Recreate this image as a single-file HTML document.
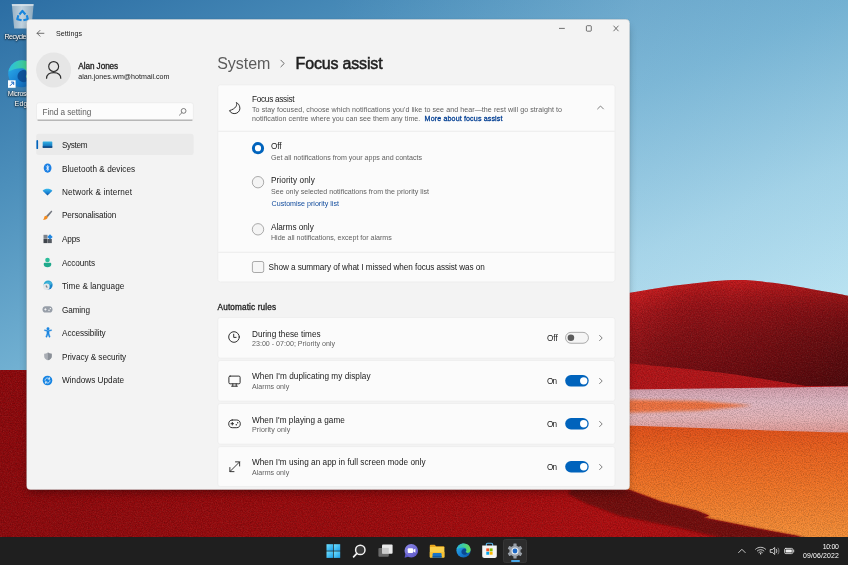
<!DOCTYPE html>
<html lang="en"><head><meta charset="utf-8"><title>Settings - Focus assist</title>
<style>
*{box-sizing:border-box;margin:0;padding:0}
html,body{width:848px;height:565px;overflow:hidden;background:#8e0c10}
body{position:relative;font-family:"Liberation Sans",sans-serif;}
.abs{position:absolute}
.t{position:absolute;white-space:nowrap;line-height:1;}
#bg{position:absolute;left:0;top:0;width:848px;height:565px}
#win{position:absolute;left:28px;top:21px;width:600px;height:467px;background:#f3f3f3;border-radius:4.5px;box-shadow:0 0 0 1px rgba(0,0,0,.06),0 5px 9px rgba(0,0,0,.3),0 1px 3px rgba(0,0,0,.12)}
#tb{position:absolute;left:0;top:537px;width:848px;height:28px;background:#1f1f1f}
svg{position:absolute;overflow:visible}
</style></head><body>
<svg id="bg" width="848" height="565" viewBox="0 0 848 565">
<defs>
<linearGradient id="sky" gradientUnits="userSpaceOnUse" x1="0" y1="0" x2="244" y2="560">
<stop offset="0" stop-color="#2b6da3"/><stop offset=".28" stop-color="#4c8fbb"/><stop offset=".555" stop-color="#70afd1"/><stop offset=".8" stop-color="#9fd0e6"/><stop offset="1" stop-color="#b9e2f1"/>
</linearGradient>
<radialGradient id="hill" gradientUnits="userSpaceOnUse" cx="733" cy="699.400" r="421">
<stop offset=".76" stop-color="#6e0b10"/><stop offset=".87" stop-color="#841015"/><stop offset=".935" stop-color="#9a1218"/><stop offset=".968" stop-color="#b0161b"/><stop offset=".988" stop-color="#c3191d"/><stop offset="1" stop-color="#cb1c20"/>
</radialGradient>
<linearGradient id="hsh" gradientUnits="userSpaceOnUse" x1="630" y1="300" x2="845" y2="385"><stop offset="0" stop-color="#d82226" stop-opacity=".3"/><stop offset=".4" stop-color="#400" stop-opacity=".03"/><stop offset="1" stop-color="#000" stop-opacity=".32"/></linearGradient>
<linearGradient id="org" gradientUnits="userSpaceOnUse" x1="0" y1="425" x2="0" y2="540">
<stop offset="0" stop-color="#e2501a"/><stop offset=".25" stop-color="#ec6420"/><stop offset=".55" stop-color="#f27628"/><stop offset="1" stop-color="#f7923a"/>
</linearGradient>
<linearGradient id="field" x1="0" y1="0" x2="1" y2="0">
<stop offset="0" stop-color="#8e090d"/><stop offset=".45" stop-color="#9d0b0e"/><stop offset=".75" stop-color="#b00e11"/><stop offset="1" stop-color="#a80d10"/>
</linearGradient>
<linearGradient id="pink" gradientUnits="userSpaceOnUse" x1="0" y1="386" x2="0" y2="432">
<stop offset="0" stop-color="#d39cab"/><stop offset=".35" stop-color="#e0b8c4"/><stop offset=".7" stop-color="#e6b4b8"/><stop offset="1" stop-color="#e39c98"/>
</linearGradient>
<filter id="b8" filterUnits="userSpaceOnUse" x="580" y="220" width="300" height="200"><feGaussianBlur stdDeviation="13"/></filter>
<filter id="b1" filterUnits="userSpaceOnUse" x="520" y="470" width="330" height="90"><feGaussianBlur stdDeviation="1.200"/></filter>
<filter id="b3" filterUnits="userSpaceOnUse" x="520" y="470" width="330" height="90"><feGaussianBlur stdDeviation="3"/></filter>
<filter id="b4" filterUnits="userSpaceOnUse" x="580" y="220" width="300" height="330"><feGaussianBlur stdDeviation="4"/></filter>
<filter id="b2" filterUnits="userSpaceOnUse" x="580" y="220" width="300" height="330"><feGaussianBlur stdDeviation="1.500"/></filter>
<filter id="nz" filterUnits="userSpaceOnUse" x="0" y="270" width="848" height="270"><feTurbulence type="fractalNoise" baseFrequency=".85" numOctaves="2" seed="7" result="n"/><feColorMatrix type="matrix" values="0 0 0 0 0  0 0 0 0 0  0 0 0 0 0  2 0 0 0 -.75"/></filter>
<filter id="nzw" filterUnits="userSpaceOnUse" x="0" y="270" width="848" height="270"><feTurbulence type="fractalNoise" baseFrequency=".8" numOctaves="2" seed="23" result="n"/><feColorMatrix type="matrix" values="0 0 0 0 1  0 0 0 0 .9  0 0 0 0 .7  0 2 0 0 -.8"/></filter>
<clipPath id="gc"><rect x="0" y="370" width="626" height="170"/><path d="M624 293.700L630 292.800C639 291.400 645.700 290 654 288.700C662.300 287.400 671.300 286.100 680 285C688.700 283.900 697.300 282.700 706 281.900C714.700 281.100 724.200 280.300 732 280.100C739.800 279.900 743.900 279.800 752.500 280.500C761.100 281.200 774.100 282.900 783.600 284.300C793.100 285.700 801 287.200 809.600 288.700C818.200 290.200 828.400 292 835.500 293.300C842.600 294.600 846.200 295.500 852 296.600V386H806C780 382 745 375.500 718 372.300C690 369 650 365 624 363Z"/><rect x="620" y="362" width="228" height="178"/></clipPath>
<linearGradient id="skyx" gradientUnits="userSpaceOnUse" x1="330" y1="0" x2="848" y2="0"><stop offset="0" stop-color="#d8f0fb" stop-opacity="0"/><stop offset=".6" stop-color="#d8f0fb" stop-opacity=".13"/><stop offset="1" stop-color="#d8f0fb" stop-opacity=".03"/></linearGradient>
</defs>
<rect width="848" height="565" fill="url(#field)"/>
<rect width="848" height="370" fill="url(#sky)"/>
<rect width="848" height="370" fill="url(#skyx)"/>
<path d="M620 300H848V540H806L797.800 536L770.600 531L736.600 524.200L703 517.600L709.500 515.700L696 510.600L662 502L629.600 490L620 488Z" fill="url(#org)"/>
<path d="M620 388.500C700 387 780 386 848 385.500V432.600C780 431 700 428 620 425.300Z" fill="url(#pink)"/>
<path d="M620 399.500L700 401L752 405.500L700 410.500L620 413Z" fill="#f0703a" filter="url(#b2)" opacity=".95"/>
<path d="M626 360H848V386.500L626 389.500Z" fill="#b41519"/>
<path d="M624 293.700L630 292.800C639 291.400 645.700 290 654 288.700C662.300 287.400 671.300 286.100 680 285C688.700 283.900 697.300 282.700 706 281.900C714.700 281.100 724.200 280.300 732 280.100C739.800 279.900 743.900 279.800 752.500 280.500C761.100 281.200 774.100 282.900 783.600 284.300C793.100 285.700 801 287.200 809.600 288.700C818.200 290.200 828.400 292 835.500 293.300C842.600 294.600 846.200 295.500 852 296.600V386H806C780 382 745 375.500 718 372.300C690 369 650 365 624 363Z" fill="url(#hill)"/>
<path d="M624 293.700L630 292.800C639 291.400 645.700 290 654 288.700C662.300 287.400 671.300 286.100 680 285C688.700 283.900 697.300 282.700 706 281.900C714.700 281.100 724.200 280.300 732 280.100C739.800 279.900 743.900 279.800 752.500 280.500C761.100 281.200 774.100 282.900 783.600 284.300C793.100 285.700 801 287.200 809.600 288.700C818.200 290.200 828.400 292 835.500 293.300C842.600 294.600 846.200 295.500 852 296.600V386H806C780 382 745 375.500 718 372.300C690 369 650 365 624 363Z" fill="url(#hsh)"/>
<path d="M572 488L629.600 490L662 502L696 510.600L709.500 515.700L703 517.600L736.600 524.200L770.600 531L797.800 536L806 538L722 538L680 528L620 516L585 503L568 494Z" fill="#730809" filter="url(#b1)"/>
<g clip-path="url(#gc)"><rect x="0" y="270" width="848" height="270" filter="url(#nz)" opacity=".22"/><rect x="0" y="270" width="848" height="270" filter="url(#nzw)" opacity=".08"/></g>
</svg>

<!-- recycle bin -->
<svg style="left:11px;top:2px" width="24" height="30" viewBox="0 0 24 30"><defs><linearGradient id="rb" x1="0" y1="0" x2="1" y2="0"><stop offset="0" stop-color="#9fb6c7"/><stop offset=".45" stop-color="#ccd9e2"/><stop offset="1" stop-color="#95aec0"/></linearGradient></defs><path d="M.8 2.200H22.600L20.400 26.400H3.200Z" fill="url(#rb)" opacity=".93"/><path d="M.8 2.200H22.600L22.400 3.800H1Z" fill="#dfe7ec"/><g fill="none" stroke="#1886de" stroke-width="2.500" stroke-linejoin="round" transform="translate(11.400 14) scale(.86) translate(-11.700 -13.600)"><path d="M8.300 11.800L11.700 7.600L15.200 11.800"/><path d="M16.800 12.700L18 17.300L12.800 18.600"/><path d="M10.800 18.600L5.700 17.300L7 12.700"/></g></svg>
<!-- edge shortcut -->
<svg style="left:8px;top:60px" width="28" height="28" viewBox="0 0 28 28"><defs><linearGradient id="eg1" x1="0" y1="0" x2="1" y2="1"><stop offset="0" stop-color="#2fb8ee"/><stop offset=".5" stop-color="#1a84d4"/><stop offset="1" stop-color="#0c59a4"/></linearGradient><linearGradient id="eg2" x1="0" y1="0" x2="1" y2="0"><stop offset="0" stop-color="#2bbfe0"/><stop offset=".6" stop-color="#3fcf9a"/><stop offset="1" stop-color="#6fdb55"/></linearGradient></defs><circle cx="13.700" cy="13.700" r="13.500" fill="url(#eg1)"/><path d="M.5 11.500C2 5 7.500 .2 14 .2C21.500 .2 27.200 6 27.200 12.500C27.200 16 24.500 18.500 21.300 18.500C19 18.500 17.800 17.600 17.800 16.500C17.800 15.300 19 14.800 19 13C19 10.300 16.500 8.200 13 8.200C8.300 8.200 3.500 10 .5 11.500Z" fill="url(#eg2)"/><path d="M9.500 16.500C9.500 12.500 12.800 10 15.800 10C17.700 10 19 11.200 19 13C19 14.800 17.800 15.300 17.800 16.500C17.800 17.600 19 18.500 21.300 18.500C19.200 21.800 15.800 23 13.500 21.800C11 20.600 9.500 18.800 9.500 16.500Z" fill="#0b4a92" opacity=".85"/><rect x="0" y="20.300" width="7.600" height="7.500" fill="#fff"/><path d="M2 25.800L5.600 22.200M2.900 22.100H5.700V24.900" fill="none" stroke="#1667c4" stroke-width="1"/></svg>
<div style="position:absolute;left:0;top:0;width:848px;height:565px;will-change:transform">
<span class="t" style="left:4.5px;top:34px;font-size:7.1px;color:#ffffff;text-shadow:0 0 2px rgba(0,0,0,.9),0 1px 2px rgba(0,0,0,.8);letter-spacing:-.55px;">Recycle Bin</span>
<span class="t" style="left:7.7px;top:91px;font-size:7.1px;color:#ffffff;text-shadow:0 0 2px rgba(0,0,0,.9),0 1px 2px rgba(0,0,0,.8);letter-spacing:-.4px;">Microsoft</span>
<span class="t" style="left:14.6px;top:101px;font-size:7.1px;color:#ffffff;text-shadow:0 0 2px rgba(0,0,0,.9),0 1px 2px rgba(0,0,0,.8);letter-spacing:.1px;">Edge</span>
</div>

<div id="win"></div>
<svg style="left:0;top:0" width="848" height="565" viewBox="0 0 848 565">
<rect x="26.500" y="19.300" width="603.250" height="470.550" rx="4" fill="#f3f3f3" stroke="#000" stroke-opacity=".18" stroke-width=".5"/>
<circle cx="53.600" cy="70" r="17.500" fill="#e6e6e6"/>
<rect x="36.500" y="102.700" width="156.900" height="17.700" rx="2.500" fill="#fcfcfc" stroke="#e6e6e6" stroke-width=".6"/>
<path d="M38 120.150H192" stroke="#8e8e8e" stroke-width=".9" stroke-linecap="round"/>
<rect x="36.200" y="133.800" width="157.400" height="21.200" rx="2.500" fill="#eaeaea"/>
<rect x="36.400" y="140.100" width="1.700" height="8.900" rx=".85" fill="#0063bc"/>
<g fill="#fbfbfb" stroke="#e9e9e9" stroke-width=".6">
<rect x="217.800" y="84.800" width="397.200" height="197.100" rx="2.500"/>
<rect x="217.800" y="317.500" width="397.200" height="40.700" rx="2.500"/>
<rect x="217.800" y="360.500" width="397.200" height="40.700" rx="2.500"/>
<rect x="217.800" y="403.500" width="397.200" height="40.700" rx="2.500"/>
<rect x="217.800" y="446.600" width="397.200" height="39.900" rx="2.500"/>
</g>
<path d="M218.100 131.300H614.700M218.100 252.300H614.700" stroke="#e7e7e7" stroke-width=".7"/>
</svg>
<!-- title bar -->
<svg style="left:36px;top:29px" width="9" height="9" viewBox="0 0 9 9"><path d="M7.9 4.3H1.2M4 1.4L1.1 4.3L4 7.2" fill="none" stroke="#444" stroke-width=".75" stroke-linecap="round" stroke-linejoin="round"/></svg>
<svg style="left:555px;top:22px" width="70" height="14" viewBox="0 0 70 14"><g fill="none" stroke="#3a3a3a" stroke-width=".7"><path d="M4 6.4H9.8"/><rect x="31.400" y="3.700" width="4.900" height="5.500" rx=".9"/><path d="M58.500 3.700L63.500 9.200M63.500 3.700L58.500 9.200"/></g></svg>
<!-- avatar -->
<svg style="left:44px;top:60px" width="19" height="20" viewBox="0 0 19 20"><g fill="none" stroke="#2d2d2d" stroke-width="1.15"><circle cx="9.650" cy="6.500" r="4.950"/><path d="M2.500 18.700C2.500 14.300 5.600 12.600 9.650 12.600C13.700 12.600 16.800 14.300 16.800 18.700" stroke-linecap="butt"/></g></svg>
<!-- search -->
<svg style="left:178px;top:107px" width="10" height="10" viewBox="0 0 10 10"><g fill="none" stroke="#555" stroke-width=".75"><circle cx="5.6" cy="3.9" r="2.4"/><path d="M3.9 5.7L1.4 8.2" stroke-linecap="round"/></g></svg>
<!-- nav selected -->
<!-- cards -->
<!-- heading chevron -->
<svg style="left:279px;top:58px" width="8" height="11" viewBox="0 0 8 11"><path d="M1.900 2.200L5.200 5.500L1.900 8.800" fill="none" stroke="#5c5c5c" stroke-width=".9" stroke-linecap="round" stroke-linejoin="round"/></svg>
<!-- card header icons -->
<svg style="left:228px;top:100px" width="14" height="16" viewBox="228 100 14 16"><path d="M236.300 102.500C237.500 105.300 235.900 108.700 229.500 110.600C230.500 113 233.400 114.200 236.200 113.300C239 112.400 240.500 109.600 239.700 106.800C239.200 104.800 238 103.300 236.300 102.500Z" fill="none" stroke="#262626" stroke-width=".95" stroke-linejoin="round"/></svg>
<svg style="left:596px;top:104px" width="9" height="7" viewBox="0 0 9 7"><path d="M1.6 4.9L4.5 2L7.4 4.9" fill="none" stroke="#555" stroke-width=".75" stroke-linecap="round" stroke-linejoin="round"/></svg>
<!-- radios -->
<svg style="left:250px;top:140px" width="16" height="136" viewBox="250 140 16 136"><circle cx="258" cy="148.200" r="4.600" fill="#fff" stroke="#0063bc" stroke-width="3"/><circle cx="258" cy="182.200" r="5.700" fill="#f4f4f4" stroke="#8a8a8a" stroke-width=".7"/><circle cx="258" cy="229.300" r="5.700" fill="#f4f4f4" stroke="#8a8a8a" stroke-width=".7"/><rect x="252.400" y="261.500" width="11.300" height="11" rx="1.800" fill="#f6f6f6" stroke="#868686" stroke-width=".7"/></svg>
<!-- toggles -->
<svg style="left:560px;top:328px" width="34" height="146" viewBox="560 328 34 146"><rect x="565.550" y="332.350" width="22.900" height="10.900" rx="5.450" fill="#f5f5f5" stroke="#8a8a8a" stroke-width=".7"/><circle cx="570.900" cy="337.800" r="3.300" fill="#5c5c5c"/><rect x="565.200" y="375.100" width="23.500" height="11.500" rx="5.750" fill="#0063bc"/><circle cx="583.700" cy="380.850" r="3.700" fill="#fff"/><rect x="565.200" y="418.050" width="23.500" height="11.500" rx="5.750" fill="#0063bc"/><circle cx="583.700" cy="423.800" r="3.700" fill="#fff"/><rect x="565.200" y="461.000" width="23.500" height="11.500" rx="5.750" fill="#0063bc"/><circle cx="583.700" cy="466.750" r="3.700" fill="#fff"/></svg>
<!-- row chevrons -->
<svg style="left:597px;top:333px" width="8" height="140" viewBox="0 0 8 140"><g fill="none" stroke="#555" stroke-width=".75" stroke-linecap="round" stroke-linejoin="round"><path d="M2.6 2.4L5.2 5L2.6 7.6"/><path d="M2.6 45.4L5.2 48L2.6 50.6"/><path d="M2.6 88.4L5.2 91L2.6 93.6"/><path d="M2.6 131.4L5.2 134L2.6 136.6"/></g></svg>
<!-- rule icons -->
<svg style="left:228px;top:331.300px" width="12" height="12" viewBox="0 0 12 12"><g fill="none" stroke="#262626" stroke-width=".95" stroke-linecap="round" stroke-linejoin="round"><circle cx="6" cy="6" r="5.300"/><path d="M5.7 3.2V6.4H8.1"/></g></svg>
<svg style="left:228px;top:375px" width="13" height="12" viewBox="0 0 13 12"><g fill="none" stroke="#262626" stroke-width=".95" stroke-linecap="round" stroke-linejoin="round"><rect x=".9" y="1.1" width="11.2" height="7.7" rx="1.2"/><path d="M4.8 8.9V11M8.2 8.9V11M3.6 11.2H9.4"/></g></svg>
<svg style="left:228px;top:418.6px" width="13" height="10" viewBox="0 0 13 10"><g fill="none" stroke="#262626" stroke-width=".95" stroke-linecap="round" stroke-linejoin="round"><path d="M4.2 1H8.8C10.9 1 12.3 2.6 12.3 4.8C12.3 7 10.9 8.7 8.8 8.7H4.2C2.1 8.7 .7 7 .7 4.8C.7 2.6 2.1 1 4.2 1Z"/><path d="M3 4.7H5.6M4.3 3.4V6"/></g><circle cx="8.3" cy="5.7" r=".7" fill="#2a2a2a"/><circle cx="9.7" cy="3.7" r=".7" fill="#2a2a2a"/></svg>
<svg style="left:228.600px;top:460.900px" width="11.500" height="11.500" viewBox="0 0 12 12"><g fill="none" stroke="#262626" stroke-width=".95" stroke-linecap="round" stroke-linejoin="round"><path d="M1 11L11 1M6.8 .9H11.1V5.2M.9 6.8V11.1H5.2"/></g></svg>
<!-- nav icons -->
<svg style="left:42px;top:140px" width="11" height="9" viewBox="0 0 11 9"><defs><linearGradient id="ns" x1="0" y1="0" x2="0" y2="1"><stop offset="0" stop-color="#35b4e6"/><stop offset=".75" stop-color="#1476bd"/><stop offset="1" stop-color="#0c4f94"/></linearGradient></defs><rect x=".7" y="1.4" width="9.6" height="6.3" rx=".7" fill="url(#ns)"/><rect x=".7" y="6.5" width="9.6" height="1.2" fill="#0b3f78"/></svg>
<svg style="left:43px;top:163px" width="9" height="10" viewBox="0 0 9 10"><ellipse cx="4.6" cy="5.1" rx="3.9" ry="4.6" fill="#1a7fe4"/><path d="M3.1 3.5L6 6.3L4.6 7.7V2.4L6 3.8L3.1 6.6" fill="none" stroke="#fff" stroke-width=".7" stroke-linejoin="round" stroke-linecap="round"/></svg>
<svg style="left:42px;top:188px" width="11" height="8" viewBox="0 0 11 8"><defs><linearGradient id="nw" x1="0" y1="0" x2="0" y2="1"><stop offset="0" stop-color="#38b9ec"/><stop offset=".55" stop-color="#1b86d6"/><stop offset="1" stop-color="#0b4f9c"/></linearGradient></defs><path d="M.6 2.8C3.3 .2 7.7 .2 10.4 2.8L5.5 7.4Z" fill="url(#nw)"/></svg>
<svg style="left:42px;top:210px" width="11" height="11" viewBox="0 0 11 11"><path d="M9.400 .5L4.300 5.800L5.700 7.200L10.300 1.500Z" fill="#72767e"/><path d="M4.500 5.700C3.200 5.400 2.300 6.300 2.200 7.400C2.100 8.500 1.600 9.200 .8 9.600C2.800 10.300 5.400 9.700 5.800 7.100Z" fill="#f28b1e"/></svg>
<svg style="left:42px;top:233.600px" width="11" height="11" viewBox="0 0 11 11"><rect x="1.500" y=".8" width="4" height="4" fill="#7c828a"/><rect x="1.500" y="5" width="4" height="4.100" fill="#3f444b"/><rect x="5.700" y="5" width="4.100" height="4.100" fill="#555a62"/><path d="M8 .2L10.700 2.900L8 5.600L5.300 2.900Z" fill="#1f86e0"/></svg>
<svg style="left:42px;top:257px" width="11" height="11" viewBox="0 0 11 11"><circle cx="5.5" cy="3" r="2.3" fill="#2bbd9a"/><path d="M1.7 7C1.7 6.2 2.3 5.8 3 5.8H8C8.7 5.8 9.3 6.2 9.3 7C9.3 9.1 7.7 10.2 5.5 10.2C3.3 10.2 1.7 9.1 1.7 7Z" fill="#1fa98c"/></svg>
<svg style="left:42px;top:279.900px" width="11" height="11" viewBox="0 0 11 11"><defs><linearGradient id="ng" x1="0" y1="0" x2="1" y2="1"><stop offset="0" stop-color="#2bb6d2"/><stop offset="1" stop-color="#1272c6"/></linearGradient></defs><circle cx="6.100" cy="5" r="4.500" fill="url(#ng)"/><path d="M4.600 1.200C6 2.200 7.400 1.600 8.400 1.300C9.400 2.200 10 3.300 10.400 4.400C9 4 7.600 5 7.800 6.600C6.600 7.300 5 6 4.300 4.400Z" fill="#5cc8e8" opacity=".55"/><circle cx="4.400" cy="6.800" r="3.200" fill="#e4e7ea"/><path d="M4.300 5.300V7.100H5.600" fill="none" stroke="#4a4f55" stroke-width=".7"/></svg>
<svg style="left:42px;top:305.400px" width="11" height="9" viewBox="0 0 11 9"><path d="M3.4 1.2H7.6C9.4 1.2 10.5 2.6 10.5 4.4C10.5 6.2 9.4 7.6 7.6 7.6H3.4C1.6 7.6 .5 6.2 .5 4.4C.5 2.6 1.6 1.2 3.4 1.2Z" fill="#979ea8"/><path d="M2.2 4.4H4.6M3.4 3.2V5.6" stroke="#fff" stroke-width=".7"/><circle cx="7" cy="5.2" r=".7" fill="#fff"/><circle cx="8.4" cy="3.6" r=".7" fill="#fff"/></svg>
<svg style="left:42.600px;top:327.300px" width="10" height="11" viewBox="0 0 11 12"><circle cx="5.5" cy="1.9" r="1.600" fill="#1b86e0"/><path d="M1.5 3.9L4.3 4.6V7.2L3.1 10.9L4.2 11.3L5.5 8L6.8 11.3L7.9 10.9L6.7 7.2V4.6L9.5 3.9L9.3 3L5.5 3.7L1.7 3Z" fill="#1b86e0" stroke="#1b86e0" stroke-width=".5" stroke-linejoin="round"/></svg>
<svg style="left:42.700px;top:352.200px" width="9.900" height="8.800" viewBox="0 0 11 11" preserveAspectRatio="none"><path d="M5.5 .7C6.9 1.8 8.3 2.2 9.7 2.3V5.4C9.7 7.9 7.9 9.6 5.5 10.4C3.1 9.6 1.3 7.9 1.3 5.4V2.3C2.7 2.2 4.1 1.8 5.5 .7Z" fill="#a9adb4"/><path d="M5.5 .7C6.9 1.8 8.3 2.2 9.7 2.3V5.4C9.7 7.9 7.9 9.6 5.5 10.4Z" fill="#8a8f97"/></svg>
<svg style="left:42.200px;top:374.700px" width="11" height="11" viewBox="0 0 11 11"><circle cx="5.5" cy="5.5" r="4.8" fill="#1684e2"/><path d="M3 5.3C3.1 3.9 4.2 3 5.5 3C6.3 3 7 3.4 7.4 3.9M7.6 2.7V4.1H6.2M8 5.7C7.9 7.1 6.8 8 5.5 8C4.7 8 4 7.6 3.6 7.1M3.4 8.3V6.9H4.8" fill="none" stroke="#fff" stroke-width=".75" stroke-linecap="round" stroke-linejoin="round"/></svg>

<div id="tb"></div>
<!-- active app bg -->
<div class="abs" style="left:503px;top:538.8px;width:24px;height:23.8px;border-radius:2.5px;background:#2d2d2d;border:.5px solid #363636"></div>
<div class="abs" style="left:510.8px;top:560.1px;width:9.2px;height:1.7px;border-radius:1px;background:#4aa8e8"></div>
<!-- start -->
<svg style="left:326px;top:544px" width="15" height="15" viewBox="0 0 15 15"><defs><linearGradient id="st" x1="0" y1="0" x2="1" y2="1"><stop offset="0" stop-color="#6fe0ff"/><stop offset="1" stop-color="#1d9fe8"/></linearGradient></defs><g fill="url(#st)"><rect x=".5" y=".2" width="6.5" height="6.5"/><rect x="7.7" y=".2" width="6.5" height="6.5"/><rect x=".5" y="7.4" width="6.5" height="6.5"/><rect x="7.7" y="7.4" width="6.5" height="6.5"/></g></svg>
<!-- search -->
<svg style="left:351px;top:542px" width="18" height="18" viewBox="0 0 18 18"><circle cx="9.3" cy="7.9" r="4.7" fill="#3a3a3a" stroke="#f2f2f2" stroke-width="1.5"/><path d="M5.9 11.4L2.6 14.9" stroke="#f2f2f2" stroke-width="1.7" stroke-linecap="round"/></svg>
<!-- task view -->
<svg style="left:377px;top:543px" width="17" height="15" viewBox="0 0 17 15"><rect x="1.4" y="4.9" width="10.4" height="8.8" rx="1" fill="#6a6a6a"/><rect x="5" y="1.4" width="10.6" height="9.4" rx="1" fill="#e9e9e9"/><rect x="5" y="4.9" width="6.8" height="5.9" fill="#b8b8b8" opacity=".6"/></svg>
<!-- chat -->
<svg style="left:403px;top:543px" width="17" height="16" viewBox="0 0 17 16"><defs><linearGradient id="ch" x1="0" y1="0" x2="1" y2="1"><stop offset="0" stop-color="#8f8ae8"/><stop offset="1" stop-color="#5a54c4"/></linearGradient></defs><circle cx="8.3" cy="7.7" r="6.8" fill="url(#ch)"/><path d="M2.4 10.5L1.6 14.8L6 13.6Z" fill="#5f59c8"/><rect x="4.7" y="5.3" width="5.4" height="4.8" rx="1" fill="#fff"/><path d="M10.3 7L12.4 5.6V9.8L10.3 8.4Z" fill="#fff"/></svg>
<!-- explorer -->
<svg style="left:429px;top:544px" width="17" height="15" viewBox="0 0 17 15"><path d="M.8 1.6C.8 1.1 1.2 .7 1.7 .7H5.6L7.2 2.3H14.5C15 2.3 15.4 2.7 15.4 3.2V4H.8Z" fill="#e9a820"/><rect x=".8" y="3.1" width="14.6" height="10.5" rx=".9" fill="#fbd04a"/><path d="M.8 8H15.4V12.7C15.4 13.2 15 13.6 14.5 13.6H1.7C1.2 13.6 .8 13.2 .8 12.7Z" fill="#f7c234"/><path d="M3.6 13.6V10.3C3.6 9.6 4.1 9.1 4.8 9.1H11.4C12.1 9.1 12.6 9.6 12.6 10.3V13.6Z" fill="#1a74c8"/><rect x="3.6" y="11.9" width="9" height="1.7" fill="#135aa0"/></svg>
<!-- edge -->
<svg style="left:456px;top:543px" width="15" height="15" viewBox="0 0 15 15"><defs><linearGradient id="e1" x1="0" y1="0" x2="1" y2="1"><stop offset="0" stop-color="#2fb7ee"/><stop offset=".6" stop-color="#1478cf"/><stop offset="1" stop-color="#0b4f9e"/></linearGradient><linearGradient id="e2" x1="0" y1="0" x2="1" y2="0"><stop offset="0" stop-color="#26b6dc"/><stop offset=".6" stop-color="#48d08a"/><stop offset="1" stop-color="#6edb4e"/></linearGradient></defs><circle cx="7.5" cy="7.5" r="7.1" fill="url(#e1)"/><path d="M.6 6.2C1.4 2.7 4.3 .4 7.7 .4C11.6 .4 14.6 3.3 14.6 6.7C14.6 8.6 13.2 9.9 11.5 9.9C10.3 9.9 9.6 9.4 9.6 8.8C9.6 8.2 10.3 7.9 10.3 6.9C10.3 5.5 9 4.4 7.1 4.4C4.6 4.4 2.2 5.4 .6 6.2Z" fill="url(#e2)"/><path d="M5.4 8.8C5.4 6.7 7.1 5.4 8.6 5.4C9.6 5.4 10.3 6 10.3 6.9C10.3 7.9 9.6 8.2 9.6 8.8C9.6 9.4 10.3 9.9 11.5 9.9C10.4 11.6 8.6 12.2 7.4 11.6C6.1 11 5.4 10 5.4 8.8Z" fill="#0a3f86" opacity=".85"/></svg>
<!-- store -->
<svg style="left:481px;top:541px" width="17" height="18" viewBox="0 0 17 18"><path d="M5.3 5.2V3.6C5.3 2.9 5.9 2.3 6.6 2.3H10.4C11.1 2.3 11.7 2.9 11.7 3.6V5.2" fill="none" stroke="#58b8f0" stroke-width="1.1"/><path d="M1.2 4.6H15.8V15C15.8 16.1 14.9 17 13.8 17H3.2C2.1 17 1.200 16.1 1.200 15Z" fill="#f4f4f4"/><rect x="5.3" y="7.400" width="2.9" height="2.900" fill="#f25022"/><rect x="8.700" y="7.400" width="2.900" height="2.900" fill="#7fba00"/><rect x="5.3" y="10.800" width="2.900" height="2.900" fill="#00a4ef"/><rect x="8.700" y="10.800" width="2.900" height="2.900" fill="#ffb900"/></svg>
<!-- settings gear -->
<svg style="left:507px;top:542.500px" width="16" height="16" viewBox="0 0 16 16"><g transform="translate(8 8)"><g fill="#9aa0a8"><circle r="5.6"/><g id="tooth"><rect x="-1.600" y="-7.500" width="3.200" height="3" rx=".5"/></g><rect x="-1.600" y="-7.500" width="3.200" height="3" rx=".5" transform="rotate(60)"/><rect x="-1.600" y="-7.500" width="3.200" height="3" rx=".5" transform="rotate(120)"/><rect x="-1.600" y="-7.500" width="3.200" height="3" rx=".5" transform="rotate(180)"/><rect x="-1.600" y="-7.500" width="3.200" height="3" rx=".5" transform="rotate(240)"/><rect x="-1.600" y="-7.500" width="3.200" height="3" rx=".5" transform="rotate(300)"/></g><circle r="3.500" fill="#e8ecf0"/><circle r="2.400" fill="#1a66c4"/></g></svg>
<!-- tray -->
<svg style="left:736px;top:545px" width="64" height="12" viewBox="0 0 64 12"><g fill="none" stroke="#f0f0f0" stroke-width=".8" stroke-linecap="round" stroke-linejoin="round"><path d="M2.600 7.600L5.900 4.300L9.200 7.600"/><path d="M19.600 4.200C22.400 1.600 26.800 1.600 29.600 4.200M21.300 5.900C23.200 4.200 26 4.200 27.900 5.900M22.900 7.500C23.900 6.700 25.300 6.700 26.300 7.500"/><path d="M34.600 4.600H36.300L38.700 2.500V9.500L36.300 7.400H34.600Z"/><path d="M40.400 4.400C41 5.400 41 6.600 40.400 7.600" /><path d="M42.100 3.100C43.300 4.900 43.300 7.100 42.100 8.900" stroke="#999"/><rect x="48.600" y="3.400" width="8.200" height="5.200" rx="1.200"/><path d="M57.700 5.100V6.900"/></g><circle cx="24.600" cy="8.800" r=".7" fill="#f0f0f0"/><rect x="49.600" y="4.400" width="6.200" height="3.200" rx=".5" fill="#f0f0f0"/></svg>

<div id="tx" style="position:absolute;left:0;top:0;width:848px;height:565px;will-change:transform">
<span class="t" style="left:56px;top:31px;font-size:7.1px;font-weight:400;color:#202020;letter-spacing:0.051px;">Settings</span>
<span class="t" style="left:78.3px;top:63px;font-size:8.2px;font-weight:400;color:#202020;letter-spacing:-0.068px;-webkit-text-stroke:.3px #202020">Alan Jones</span>
<span class="t" style="left:78.3px;top:74px;font-size:7.1px;font-weight:400;color:#202020;letter-spacing:0.017px;">alan.jones.wm@hotmail.com</span>
<span class="t" style="left:42.5px;top:109px;font-size:8.2px;font-weight:400;color:#5f5f5f;letter-spacing:-0.035px;">Find a setting</span>
<span class="t" style="left:62px;top:142px;font-size:8.2px;font-weight:400;color:#202020;letter-spacing:-0.362px;">System</span>
<span class="t" style="left:62px;top:166px;font-size:8.2px;font-weight:400;color:#202020;letter-spacing:0.046px;">Bluetooth &amp; devices</span>
<span class="t" style="left:62px;top:189px;font-size:8.2px;font-weight:400;color:#202020;letter-spacing:0.155px;">Network &amp; internet</span>
<span class="t" style="left:62px;top:212px;font-size:8.2px;font-weight:400;color:#202020;letter-spacing:-0.120px;">Personalisation</span>
<span class="t" style="left:62px;top:236px;font-size:8.2px;font-weight:400;color:#202020;letter-spacing:-0.157px;">Apps</span>
<span class="t" style="left:62px;top:260px;font-size:8.2px;font-weight:400;color:#202020;letter-spacing:-0.098px;">Accounts</span>
<span class="t" style="left:62px;top:283px;font-size:8.2px;font-weight:400;color:#202020;letter-spacing:0.050px;">Time &amp; language</span>
<span class="t" style="left:62px;top:307px;font-size:8.2px;font-weight:400;color:#202020;letter-spacing:-0.134px;">Gaming</span>
<span class="t" style="left:62px;top:330px;font-size:8.2px;font-weight:400;color:#202020;letter-spacing:-0.074px;">Accessibility</span>
<span class="t" style="left:62px;top:354px;font-size:8.2px;font-weight:400;color:#202020;letter-spacing:-0.051px;">Privacy &amp; security</span>
<span class="t" style="left:62px;top:377px;font-size:8.2px;font-weight:400;color:#202020;letter-spacing:0.016px;">Windows Update</span>
<span class="t" style="left:217.2px;top:56px;font-size:16px;font-weight:400;color:#5c5c5c;letter-spacing:-0.029px;">System</span>
<span class="t" style="left:295.6px;top:56px;font-size:16px;font-weight:400;color:#202020;letter-spacing:-0.175px;-webkit-text-stroke:.5px #202020">Focus assist</span>
<span class="t" style="left:252px;top:96px;font-size:8.2px;font-weight:400;color:#202020;letter-spacing:-0.264px;">Focus assist</span>
<span class="t" style="left:252px;top:107px;font-size:7.1px;font-weight:400;color:#616161;letter-spacing:0.063px;">To stay focused, choose which notifications you'd like to see and hear—the rest will go straight to</span>
<span class="t" style="left:252px;top:116px;font-size:7.1px;font-weight:400;color:#616161;letter-spacing:0.053px;">notification centre where you can see them any time.</span>
<span class="t" style="left:424.6px;top:116px;font-size:7.1px;font-weight:400;color:#003e92;letter-spacing:0.135px;-webkit-text-stroke:.28px #003e92">More about focus assist</span>
<span class="t" style="left:271px;top:143px;font-size:8.2px;font-weight:400;color:#202020;letter-spacing:-0.091px;">Off</span>
<span class="t" style="left:271px;top:155px;font-size:7.1px;font-weight:400;color:#616161;letter-spacing:-0.009px;">Get all notifications from your apps and contacts</span>
<span class="t" style="left:271px;top:177px;font-size:8.2px;font-weight:400;color:#202020;letter-spacing:0.085px;">Priority only</span>
<span class="t" style="left:271px;top:189px;font-size:7.1px;font-weight:400;color:#616161;letter-spacing:0.013px;">See only selected notifications from the priority list</span>
<span class="t" style="left:271.6px;top:201px;font-size:7.1px;font-weight:400;color:#0f4a9c;letter-spacing:-0.005px;">Customise priority list</span>
<span class="t" style="left:271px;top:224px;font-size:8.2px;font-weight:400;color:#202020;letter-spacing:0.002px;">Alarms only</span>
<span class="t" style="left:271px;top:235px;font-size:7.1px;font-weight:400;color:#616161;letter-spacing:-0.018px;">Hide all notifications, except for alarms</span>
<span class="t" style="left:268.6px;top:264px;font-size:8.2px;font-weight:400;color:#202020;letter-spacing:-0.065px;">Show a summary of what I missed when focus assist was on</span>
<span class="t" style="left:217.6px;top:304px;font-size:8.2px;font-weight:400;color:#202020;letter-spacing:0.147px;-webkit-text-stroke:.3px #202020">Automatic rules</span>
<span class="t" style="left:252px;top:331px;font-size:8.2px;font-weight:400;color:#202020;letter-spacing:0.020px;">During these times</span>
<span class="t" style="left:252px;top:341px;font-size:7.1px;font-weight:400;color:#616161;letter-spacing:0.007px;">23:00 - 07:00; Priority only</span>
<span class="t" style="left:546.9px;top:335px;font-size:8.2px;font-weight:400;color:#202020;letter-spacing:0.109px;">Off</span>
<span class="t" style="left:252px;top:373px;font-size:8.2px;font-weight:400;color:#202020;letter-spacing:0.063px;">When I'm duplicating my display</span>
<span class="t" style="left:252px;top:384px;font-size:7.1px;font-weight:400;color:#616161;letter-spacing:0.014px;">Alarms only</span>
<span class="t" style="left:546.9px;top:378px;font-size:8.2px;font-weight:400;color:#202020;letter-spacing:-0.837px;">On</span>
<span class="t" style="left:252px;top:417px;font-size:8.2px;font-weight:400;color:#202020;letter-spacing:0.030px;">When I'm playing a game</span>
<span class="t" style="left:252px;top:427px;font-size:7.1px;font-weight:400;color:#616161;letter-spacing:0.095px;">Priority only</span>
<span class="t" style="left:546.9px;top:421px;font-size:8.2px;font-weight:400;color:#202020;letter-spacing:-0.837px;">On</span>
<span class="t" style="left:252px;top:459px;font-size:8.2px;font-weight:400;color:#202020;letter-spacing:0.040px;">When I'm using an app in full screen mode only</span>
<span class="t" style="left:252px;top:470px;font-size:7.1px;font-weight:400;color:#616161;letter-spacing:0.014px;">Alarms only</span>
<span class="t" style="left:546.9px;top:464px;font-size:8.2px;font-weight:400;color:#202020;letter-spacing:-0.837px;">On</span>
<span class="t" style="left:822.7px;top:544px;font-size:6.9px;font-weight:400;color:#ffffff;letter-spacing:-0.288px;">10:00</span>
<span class="t" style="left:803px;top:553px;font-size:6.9px;font-weight:400;color:#ffffff;letter-spacing:0.144px;">09/06/2022</span>
</div>
</body></html>
